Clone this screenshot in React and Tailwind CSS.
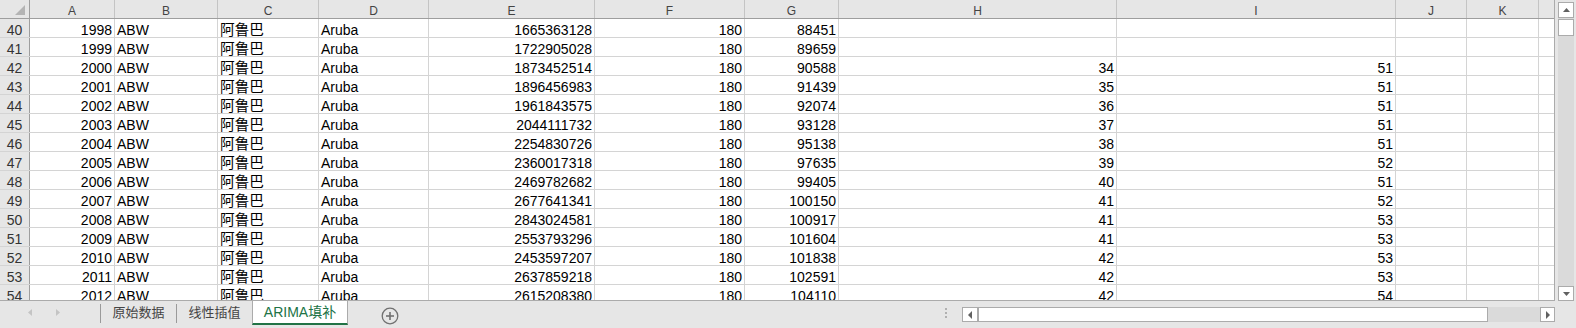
import React from 'react';

// column widths include the 1px right grid line
const cols = [
  { key: 'A', w: 85 },
  { key: 'B', w: 103 },
  { key: 'C', w: 101 },
  { key: 'D', w: 110 },
  { key: 'E', w: 166 },
  { key: 'F', w: 150 },
  { key: 'G', w: 94 },
  { key: 'H', w: 278 },
  { key: 'I', w: 279 },
  { key: 'J', w: 71 },
  { key: 'K', w: 72 },
];

const rows = [
  [40, 1998, 1665363128, 88451, '', ''],
  [41, 1999, 1722905028, 89659, '', ''],
  [42, 2000, 1873452514, 90588, 34, 51],
  [43, 2001, 1896456983, 91439, 35, 51],
  [44, 2002, 1961843575, 92074, 36, 51],
  [45, 2003, 2044111732, 93128, 37, 51],
  [46, 2004, 2254830726, 95138, 38, 51],
  [47, 2005, 2360017318, 97635, 39, 52],
  [48, 2006, 2469782682, 99405, 40, 51],
  [49, 2007, 2677641341, 100150, 41, 52],
  [50, 2008, 2843024581, 100917, 41, 53],
  [51, 2009, 2553793296, 101604, 41, 53],
  [52, 2010, 2453597207, 101838, 42, 53],
  [53, 2011, 2637859218, 102591, 42, 53],
  [54, 2012, 2615208380, 104110, 42, 54],
];

const Tri = ({ dir, color = '#616161', w = 7, h = 4 }) => {
  const pts = {
    up: `0,${h} ${w / 2},0 ${w},${h}`,
    down: `0,0 ${w},0 ${w / 2},${h}`,
    left: `${w},0 0,${h / 2} ${w},${h}`,
    right: `0,0 ${w},${h / 2} 0,${h}`,
  }[dir];
  return (
    <svg width={w} height={h} viewBox={`0 0 ${w} ${h}`}>
      <polygon points={pts} fill={color} />
    </svg>
  );
};

const Cell = ({ w, align, cjk, children }) => (
  <div
    style={{ width: w }}
    className={`shrink-0 h-full border-r border-[#d4d4d4] flex items-end overflow-hidden whitespace-nowrap ${
      align === 'r' ? 'justify-end pr-[2px]' : 'justify-start pl-[2px]'
    } ${cjk ? 'text-[14.67px]' : ''}`}
  >
    <span className="leading-[13px]">{children}</span>
  </div>
);

export default function App() {
  return (
    <div className="w-[1576px] h-[328px] bg-[#e6e6e6] flex flex-col overflow-hidden text-[14px] text-black font-['Liberation_Sans','Noto_Sans_CJK_SC',sans-serif]">
      {/* grid + vertical scrollbar */}
      <div className="flex h-[301px] shrink-0">
        <div className="w-[1555px] h-full border-r border-b border-[#ababab] bg-white overflow-hidden">
          {/* column header */}
          <div className="flex h-[19px] bg-[#e6e6e6] border-b border-[#9e9e9e] text-[12px] text-[#444]">
            <div className="w-[30px] shrink-0 h-full border-r border-[#9e9e9e] flex items-end justify-end pr-[4px] pb-[3px]">
              <svg width="10" height="10" viewBox="0 0 10 10">
                <polygon points="10,0 10,10 0,10" fill="#b4b4b4" />
              </svg>
            </div>
            {cols.map((c) => (
              <div
                key={c.key}
                style={{ width: c.w }}
                className="shrink-0 h-full border-r border-[#c4c4c4] flex items-center justify-center pt-[4px]"
              >
                <span className="leading-[12px]">{c.key}</span>
              </div>
            ))}
            <div className="flex-1" />
          </div>

          {/* data rows */}
          {rows.map(([n, year, pop, g, h, i]) => (
            <div key={n} className="flex h-[19px] border-b border-[#d4d4d4] shrink-0">
              <div className="w-[30px] shrink-0 h-full bg-[#e6e6e6] border-r border-[#9e9e9e] flex items-end justify-center text-[#333]">
                <span className="leading-[13px]">{n}</span>
              </div>
              <Cell w={85} align="r">{year}</Cell>
              <Cell w={103} align="l">ABW</Cell>
              <Cell w={101} align="l" cjk>阿鲁巴</Cell>
              <Cell w={110} align="l">Aruba</Cell>
              <Cell w={166} align="r">{pop}</Cell>
              <Cell w={150} align="r">180</Cell>
              <Cell w={94} align="r">{g}</Cell>
              <Cell w={278} align="r">{h}</Cell>
              <Cell w={279} align="r">{i}</Cell>
              <Cell w={71} align="r" />
              <Cell w={72} align="r" />
              <div className="flex-1" />
            </div>
          ))}
        </div>

        {/* vertical scrollbar */}
        <div className="w-[21px] h-full pl-[3px] pr-[2px] pt-[2px]">
          <div className="h-full bg-[#dadada] flex flex-col">
            <div className="h-[16px] bg-white border border-[#ababab] flex items-center justify-center">
              <Tri dir="up" />
            </div>
            <div className="h-[17px] bg-white border border-[#ababab] mt-px" />
            <div className="flex-1" />
            <div className="h-[15px] bg-white border border-[#ababab] flex items-center justify-center">
              <Tri dir="down" />
            </div>
          </div>
        </div>
      </div>

      {/* sheet tabs bar */}
      <div className="flex h-[27px] items-start text-[#444]">
        <div className="w-[100px] h-[22px] flex items-center pl-[28px] gap-[24px]">
          <Tri dir="left" color="#c4c4c4" w={4} h={7} />
          <Tri dir="right" color="#c4c4c4" w={4} h={7} />
        </div>
        <div className="w-px h-[19px] mt-[3px] bg-[#9a9a9a]" />
        <div className="w-[75px] h-[22px] flex items-center justify-center text-[13px] font-['Noto_Sans_CJK_SC',sans-serif]">
          原始数据
        </div>
        <div className="w-px h-[19px] mt-[3px] bg-[#9a9a9a]" />
        <div className="w-[75px] h-[22px] flex items-center justify-center text-[13px] font-['Noto_Sans_CJK_SC',sans-serif]">
          线性插值
        </div>
        <div className="w-[96px] h-[24px] bg-white border-l border-r border-[#ababab] border-b-2 border-b-[#217346] flex items-center justify-center text-[#217346] text-[14px]">
          ARIMA填补
        </div>
        <div className="ml-[33px] mt-[6px]">
          <svg width="18" height="18" viewBox="0 0 18 18">
            <circle cx="9" cy="9" r="7.8" fill="none" stroke="#707070" strokeWidth="1.3" />
            <line x1="5" y1="9" x2="13" y2="9" stroke="#707070" strokeWidth="1.6" />
            <line x1="9" y1="5" x2="9" y2="13" stroke="#707070" strokeWidth="1.6" />
          </svg>
        </div>
        <div className="flex-1" />
        <div className="w-[3px] mt-[7px] flex flex-col gap-[2px]">
          <div className="w-[2px] h-[2px] bg-[#b0b0b0]" />
          <div className="w-[2px] h-[2px] bg-[#b0b0b0]" />
          <div className="w-[2px] h-[2px] bg-[#b0b0b0]" />
        </div>
        <div className="ml-[14px] mt-[6px] w-[593px] h-[15px] flex bg-[#dadada] mr-[21px]">
          <div className="w-[16px] h-full bg-white border border-[#ababab] flex items-center justify-center">
            <Tri dir="left" w={4} h={8} />
          </div>
          <div className="w-[510px] h-full bg-white border border-[#ababab]" />
          <div className="flex-1" />
          <div className="w-[15px] h-full bg-white border border-[#ababab] flex items-center justify-center">
            <Tri dir="right" w={4} h={8} />
          </div>
        </div>
      </div>
    </div>
  );
}
